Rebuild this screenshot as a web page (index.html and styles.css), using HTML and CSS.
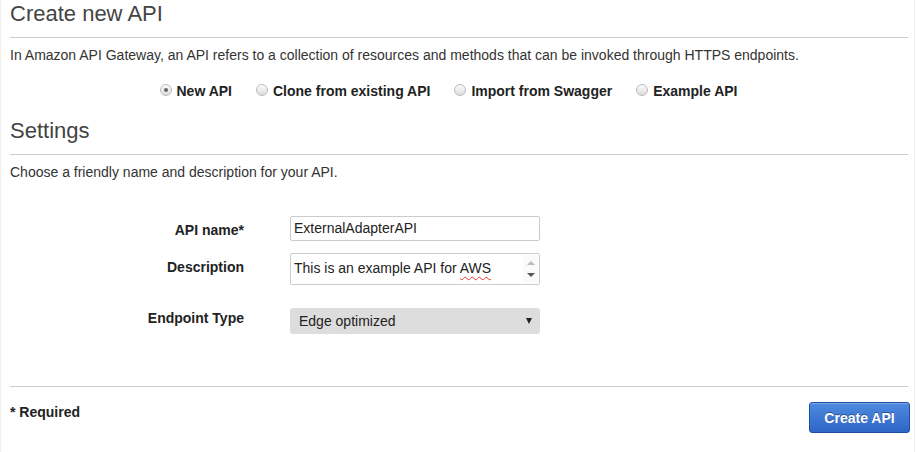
FILE: index.html
```html
<!DOCTYPE html>
<html>
<head>
<meta charset="utf-8">
<link rel="stylesheet" href="styles.css">
</head>
<body>
<div class="page">
  <h1 class="title">Create new API</h1>
  <hr class="rule">
  <p class="intro">In Amazon API Gateway, an API refers to a collection of resources and methods that can be invoked through HTTPS endpoints.</p>
  <div class="radios">
    <label class="radio"><span class="dot checked"></span>New API</label>
    <label class="radio"><span class="dot"></span>Clone from existing API</label>
    <label class="radio"><span class="dot"></span>Import from Swagger</label>
    <label class="radio"><span class="dot"></span>Example API</label>
  </div>
  <h2 class="title sub">Settings</h2>
  <hr class="rule">
  <p class="intro">Choose a friendly name and description for your API.</p>
  <div class="form">
    <div class="row r1">
      <div class="label">API name*</div>
      <div class="input">ExternalAdapterAPI</div>
    </div>
    <div class="row r2">
      <div class="label">Description</div>
      <div class="input area">This is an example API for <span class="spell">AWS</span>
        <span class="spin"><span class="up"></span><span class="down"></span></span>
      </div>
    </div>
    <div class="row r3">
      <div class="label">Endpoint Type</div>
      <div class="select">Edge optimized<span class="caret"></span></div>
    </div>
  </div>
  <hr class="rule bottom">
  <div class="footer">
    <span class="req">* Required</span>
    <button class="btn">Create API</button>
  </div>
</div>
</body>
</html>
```
FILE: styles.css
```css
html, body { margin: 0; padding: 0; background: #fff; }
body {
  font-family: "Liberation Sans", Arial, sans-serif;
  color: #222;
  font-size: 14px;
  width: 916px;
  height: 452px;
  overflow: hidden;
}
.page {
  box-sizing: border-box;
  height: 452px;
  padding: 0 6px 0 10px;
  border-left: 1px solid #f0f0f0;
  border-right: 1px solid #f0f0f0;
  margin-right: 1px;
}
.title {
  margin: 0;
  font-weight: normal;
  font-size: 22px;
  color: #444;
  line-height: 28px;
  padding-top: 0;
  margin-left: -1px;
}
.sub { margin-top: 17px; }
.rule {
  border: 0;
  border-top: 1px solid #ccc;
  margin: 9px 0 0 -1px;
  height: 0;
}
.intro {
  margin: 8px 0 0 -1px;
  line-height: 18px;
  color: #333;
}
.radios {
  display: flex;
  justify-content: center;
  gap: 24px;
  margin-top: 18px;
  font-weight: bold;
  color: #222;
  line-height: 18px;
  padding-right: 22px;
}
.radio { display: flex; align-items: center; }
.dot {
  width: 12px; height: 12px;
  box-sizing: border-box;
  border-radius: 50%;
  border: 1px solid #bbb;
  background: linear-gradient(#fafafa, #ddd);
  margin-right: 5px;
  margin-top: -3px;
  position: relative;
}
.dot.checked::after {
  content: "";
  position: absolute;
  left: 3px; top: 3px;
  width: 4px; height: 4px;
  border-radius: 50%;
  background: #666;
}
.form { margin-top: 35px; height: 164px; }
.row { display: grid; grid-template-columns: 233px 250px; column-gap: 46px; }
.label {
  text-align: right;
  font-weight: bold;
  color: #222;
  line-height: 18px;
}
.r1 .label { padding-top: 5px; }
.r2 { margin-top: 12px; }
.r2 .label { padding-top: 5px; }
.r3 { margin-top: 23px; }
.r3 .label { padding-top: 1px; }
.input {
  box-sizing: border-box;
  height: 25px;
  border: 1px solid #ccc;
  border-radius: 2px;
  padding: 3px 3px;
  line-height: 17px;
  color: #222;
}
.area {
  height: 32px;
  padding-top: 6px;
  position: relative;
}
.spell {
  text-decoration: underline wavy #e33;
  text-decoration-thickness: 1px;
  text-underline-offset: 3px;
}
.spin {
  position: absolute;
  right: 1px; top: 1px; bottom: 1px;
  width: 15px;
  background: #fafafa;
}
.up, .down {
  position: absolute;
  left: 4px;
  width: 0; height: 0;
  border-left: 4px solid transparent;
  border-right: 4px solid transparent;
}
.up { top: 6px; border-bottom: 4px solid #bbb; }
.down { top: 18px; border-top: 4px solid #555; }
.select {
  box-sizing: border-box;
  height: 26px;
  background: #ddd;
  border-radius: 3px;
  padding: 4px 9px;
  line-height: 18px;
  color: #222;
  position: relative;
}
.caret {
  position: absolute;
  right: 8px; top: 10px;
  border-left: 3px solid transparent;
  border-right: 3px solid transparent;
  border-top: 6px solid #222;
}
.bottom { margin-top: 6px; }
.footer {
  display: flex;
  justify-content: space-between;
  align-items: flex-start;
  margin: 16px -2px 0 -1px;
}
.req { font-weight: bold; color: #222; line-height: 18px; padding-top: 0; }
.btn {
  font-family: "Liberation Sans", Arial, sans-serif;
  font-size: 14px;
  font-weight: bold;
  color: #fff;
  text-shadow: 0 -1px 0 rgba(0,0,0,0.35);
  width: 101px;
  height: 31px;
  border: 1px solid #1d4f9e;
  border-radius: 3px;
  background: linear-gradient(#4e8ae0, #2f66c7);
  box-shadow: inset 0 1px 0 rgba(255,255,255,0.25);
  margin-top: -1px;
  padding: 0;
}
```
